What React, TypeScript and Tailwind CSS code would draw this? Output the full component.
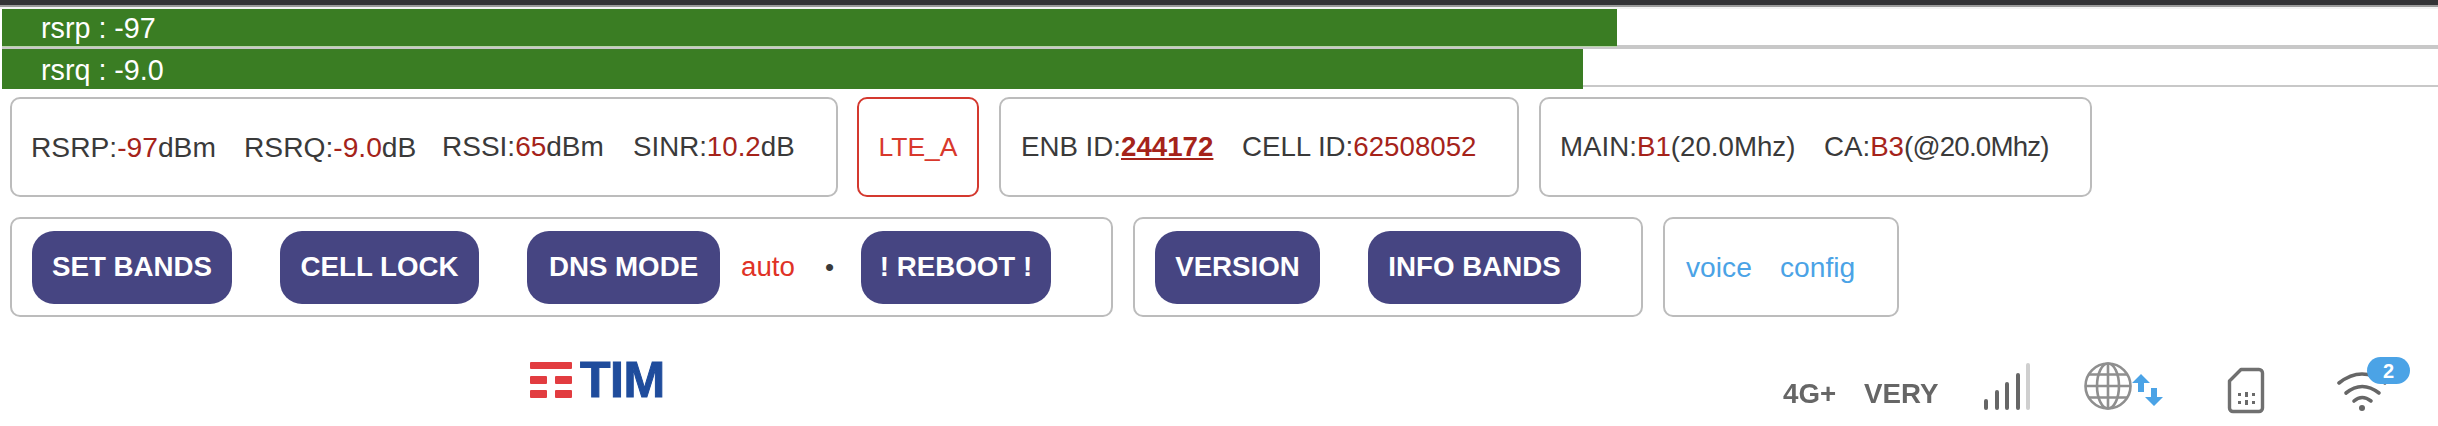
import React from "react";

const font = "font-['Liberation_Sans',Arial,sans-serif]";

function V({ children }: { children: React.ReactNode }) {
  return <span className="text-[#a5231a]">{children}</span>;
}

function Btn({ w, label, className = "" }: { w: string; label: string; className?: string }) {
  return (
    <div className={`${w} ${className} h-[73px] shrink-0 rounded-[22px] bg-[#464582] text-white font-bold flex items-center justify-center`}>
      {label}
    </div>
  );
}

function Bar({ track, bar, label }: { track: string; bar: string; label: string }) {
  return (
    <div className={`ml-[2px] ${track} border-[#c8c8c8] bg-white`}>
      <div className={`${bar} bg-[#3a7d23] text-white text-[28.7px] pl-[39px] pt-[2px] flex items-center`}>{label}</div>
    </div>
  );
}

export default function App() {
  return (
    <div className={`w-[2438px] h-[426px] overflow-hidden bg-white text-[#3a3a3a] text-[27.7px] leading-none ${font}`}>
      <div className="h-[5px] bg-[#333336]" />
      <div className="h-[2px] bg-[#9a9a9a]" />
      <div className="h-[2px] bg-[#f4f4f4]" />
      <Bar track="h-[40px] border-b-4" bar="w-[1615px] h-[38px] border-b border-[#b7d6a8]" label="rsrp : -97" />
      <Bar track="h-[38px] border-b-2" bar="w-[1581px] h-[40px]" label="rsrq : -9.0" />

      <div className="flex gap-[20px] pl-[10px] mt-[10px]">
        <div className="w-[828px] h-[100px] rounded-[10px] border-2 border-[#bcbcbc] flex items-center pl-[19px] whitespace-pre">
          <span className="w-[213px] text-[28.2px]">RSRP:<V>-97</V>dBm</span>
          <span className="w-[198px] text-[28.2px]">RSRQ:<V>-9.0</V>dB</span>
          <span className="w-[191px] text-[28px]">RSSI:<V>65</V>dBm</span>
          <span>SINR:<V>10.2</V>dB</span>
        </div>
        <div className="w-[122px] h-[100px] rounded-[10px] border-2 border-[#d4392f] text-[#d8382c] text-[26.5px] flex items-center justify-center -ml-px">LTE_A</div>
        <div className="w-[520px] h-[100px] rounded-[10px] border-2 border-[#bcbcbc] flex items-center pl-[20px] whitespace-pre">
          <span className="w-[221px]">ENB ID:<span className="font-bold underline text-[#a5231a]">244172</span></span>
          <span>CELL ID:<V>62508052</V></span>
        </div>
        <div className="w-[553px] h-[100px] rounded-[10px] border-2 border-[#bcbcbc] flex items-center pl-[19px] whitespace-pre">
          <span className="w-[264px]">MAIN:<V>B1</V>(20.0Mhz)</span>
          <span>CA:<V>B3</V><span className="tracking-[-0.8px]">(@20.0Mhz)</span></span>
        </div>
      </div>

      <div className="flex gap-[20px] pl-[10px] mt-[20px]">
        <div className="w-[1103px] h-[100px] rounded-[10px] border-2 border-[#bcbcbc] flex items-center pl-[20px]">
          <Btn w="w-[200px]" label="SET BANDS" />
          <Btn w="w-[199px]" label="CELL LOCK" className="ml-[48px]" />
          <Btn w="w-[193px]" label="DNS MODE" className="ml-[48px]" />
          <span className="ml-[21px] w-[84px] text-[#e03226]">auto</span>
          <span className="w-[36px] text-[26px]">•</span>
          <Btn w="w-[190px]" label="! REBOOT !" />
        </div>
        <div className="w-[510px] h-[100px] rounded-[10px] border-2 border-[#bcbcbc] flex items-center pl-[20px]">
          <Btn w="w-[165px]" label="VERSION" />
          <Btn w="w-[213px]" label="INFO BANDS" className="ml-[48px]" />
        </div>
        <div className="w-[236px] h-[100px] rounded-[10px] border-2 border-[#bcbcbc] flex items-center pl-[21px] text-[28.2px] text-[#4ba3e6]">
          <span className="w-[94px]">voice</span>
          <span>config</span>
        </div>
      </div>

      <div className="flex h-[109px] items-start relative">
        <svg width="42" height="36" viewBox="0 0 42 36" className="ml-[530px] mt-[45px] shrink-0 blur-[0.5px]" fill="#e23c40">
          <rect x="0" y="0" width="42" height="7" rx="1" />
          <rect x="0" y="14" width="17" height="8" rx="1" />
          <rect x="25" y="14" width="17" height="8" rx="1" />
          <rect x="0" y="28" width="17" height="8" rx="1" />
          <rect x="25" y="28" width="17" height="8" rx="1" />
        </svg>
        <span className="ml-[8px] mt-[45px] text-[50px] leading-[36px] font-bold tracking-[-0.5px] text-[#1f4c9c] [-webkit-text-stroke:1px_#1f4c9c] blur-[0.5px] shrink-0">TIM</span>

        <span className="absolute left-[1783px] top-[63px] font-bold text-[#666] blur-[0.3px]">4G+</span>
        <span className="absolute left-[1864px] top-[63px] font-bold text-[#666] blur-[0.3px]">VERY</span>

        <svg width="50" height="48" viewBox="0 0 50 48" className="absolute left-[1982px] top-[45px] blur-[0.5px]" fill="none" strokeWidth="4" strokeLinecap="round">
          <path d="M4 46V39" stroke="#666" />
          <path d="M15 46V30" stroke="#666" />
          <path d="M25 46V22" stroke="#666" />
          <path d="M36 46V13" stroke="#666" />
          <path d="M46 46V3" stroke="#cfcfcf" />
        </svg>

        <svg width="84" height="52" viewBox="0 0 84 52" className="absolute left-[2083px] top-[43px] blur-[0.5px]" fill="none">
          <g stroke="#8f8f8f" strokeWidth="2.6">
            <circle cx="25" cy="26" r="22.5" />
            <ellipse cx="25" cy="26" rx="11" ry="22.5" />
            <path d="M25 3.5V48.5M2.5 26H47.5M6 14.5H44M6 37.5H44" />
          </g>
          <g fill="#4ba3e6">
            <path d="M58 14l-9 9h6v9h6v-9h6z" />
            <path d="M71 46l9-9h-6v-9h-6v9h-6z" />
          </g>
        </svg>

        <svg width="38" height="47" viewBox="0 0 38 47" className="absolute left-[2227px] top-[50px] blur-[0.5px]" fill="none">
          <path d="M14 2.5H32a3.5 3.5 0 0 1 3.5 3.5V41a3.5 3.5 0 0 1-3.5 3.5H6A3.5 3.5 0 0 1 2.5 41V14z" stroke="#707070" strokeWidth="3.4" strokeLinejoin="round" />
          <g fill="#6a6a6a">
            <rect x="11" y="26" width="3" height="3" />
            <rect x="18" y="25" width="3" height="5" />
            <rect x="25" y="26" width="3" height="3" />
            <rect x="11" y="34" width="3" height="3" />
            <rect x="18" y="33" width="3" height="5" />
            <rect x="25" y="34" width="3" height="3" />
          </g>
        </svg>

        <svg width="60" height="50" viewBox="0 0 60 50" className="absolute left-[2332px] top-[50px] blur-[0.5px]" fill="none" stroke="#666" strokeWidth="3.6" strokeLinecap="round">
          <path d="M7 16Q30 -2 53 16" />
          <path d="M14 26Q30 13 47 26" />
          <path d="M22 34Q30 27 39 34" />
          <circle cx="30" cy="41" r="3" fill="#666" stroke="none" />
        </svg>
        <span className="absolute left-[2367px] top-[40px] w-[43px] h-[27px] rounded-full bg-[#4ba3e6] text-white font-bold text-[20px] flex items-center justify-center">2</span>
      </div>
    </div>
  );
}
